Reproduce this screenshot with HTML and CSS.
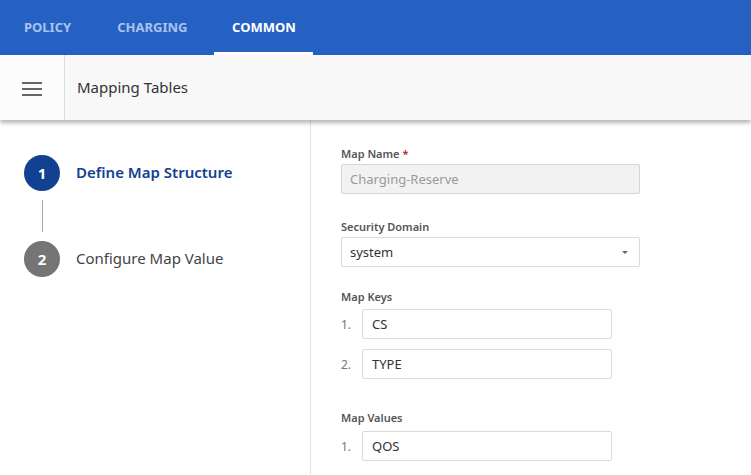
FILE: index.html
```html
<!DOCTYPE html>
<html>
<head>
<meta charset="utf-8">
<link rel="stylesheet" href="styles.css">
</head>
<body>
<nav class="tabs">
  <div class="tab">POLICY</div>
  <div class="tab">CHARGING</div>
  <div class="tab active">COMMON</div>
</nav>
<header class="header">
  <div class="menu">
    <svg width="20" height="14" viewBox="0 0 20 14"><rect x="0" y="0" width="20" height="2" fill="#666"/><rect x="0" y="6" width="20" height="2" fill="#666"/><rect x="0" y="12" width="20" height="2" fill="#666"/></svg>
  </div>
  <div class="title">Mapping Tables</div>
</header>
<main class="main">
  <aside class="steps">
    <div class="step current"><span class="num">1</span><span class="label">Define Map Structure</span></div>
    <div class="connector"></div>
    <div class="step"><span class="num">2</span><span class="label">Configure Map Value</span></div>
  </aside>
  <section class="form">
    <div class="field">
      <div class="flabel">Map Name <span class="req">*</span></div>
      <div class="input disabled">Charging-Reserve</div>
    </div>
    <div class="field">
      <div class="flabel">Security Domain</div>
      <div class="input select">system<span class="caret"></span></div>
    </div>
    <div class="field keys">
      <div class="flabel">Map Keys</div>
      <div class="row"><span class="idx">1.</span><div class="input short">CS</div></div>
      <div class="row"><span class="idx">2.</span><div class="input short">TYPE</div></div>
    </div>
    <div class="field values">
      <div class="flabel">Map Values</div>
      <div class="row"><span class="idx">1.</span><div class="input short">QOS</div></div>
    </div>
  </section>
</main>
</body>
</html>
```

FILE: styles.css
```css
* { box-sizing: border-box; }
html, body { margin: 0; padding: 0; }
body {
  width: 751px;
  height: 475px;
  overflow: hidden;
  background: #fff;
  font-family: "Noto Sans", "Open Sans", sans-serif;
  color: #333;
}
.tabs {
  height: 55px;
  background: #2561c3;
  display: flex;
  padding-left: 1px;
}
.tab {
  padding: 0 23px;
  height: 55px;
  line-height: 55px;
  font-size: 13px;
  font-weight: 700;
  color: #a9c3ee;
}
.tab.active {
  color: #fff;
  margin-left: 4px;
  padding: 0;
  width: 99px;
  text-align: center;
  box-shadow: inset 0 -3px 0 #fff;
}
.header {
  height: 65px;
  display: flex;
  background: #f8f8f8;
  box-shadow: 0 3px 4px rgba(0,0,0,0.28);
  position: relative;
  z-index: 1;
}
.menu {
  width: 65px;
  background: #fcfcfc;
  border-right: 1px solid #dcdcdc;
  display: flex;
  align-items: center;
  justify-content: center;
  padding-top: 3px;
}
.title {
  padding-left: 12px;
  display: flex;
  align-items: center;
  font-size: 15px;
  color: #333;
  padding-bottom: 1px;
}
.main {
  display: flex;
  height: 355px;
}
.steps {
  width: 311px;
  border-right: 1px solid #e2e2e2;
  padding: 35px 0 0 24px;
}
.step {
  display: flex;
  align-items: center;
  height: 36px;
}
.num {
  width: 36px;
  height: 36px;
  border-radius: 50%;
  background: #757575;
  color: #fff;
  font-size: 15px;
  font-weight: 700;
  display: flex;
  align-items: center;
  justify-content: center;
}
.step.current .num { background: #124191; }
.label {
  margin-left: 16px;
  font-size: 15px;
  color: #444;
  padding-bottom: 2px;
}
.step.current .label {
  color: #124191;
  font-weight: 600;
}
.connector {
  width: 1px;
  height: 32px;
  background: #a8a8a8;
  margin: 9px 0 9px 18px;
}
.form {
  padding: 26px 0 0 30px;
  flex: 1;
}
.field { margin-bottom: 25px; }
.field:nth-child(2) { margin-bottom: 22px; }
.field.keys { margin-bottom: 31px; }
.flabel {
  font-size: 11px;
  font-weight: 600;
  color: #555;
  margin-bottom: 3px;
  height: 15px;
}
.field.keys .flabel { margin-bottom: 5px; }
.field.values .flabel { margin-bottom: 6px; }
.req { color: #c4182f; }
.input {
  width: 299px;
  height: 30px;
  border: 1px solid #dadada;
  border-radius: 2px;
  padding: 0 8px;
  display: flex;
  align-items: center;
  font-size: 13px;
  color: #333;
  background: #fff;
}
.input.disabled {
  background: #f2f2f2;
  color: #9a9a9a;
  border-color: #d5d5d5;
}
.select { position: relative; }
.caret {
  position: absolute;
  right: 11px;
  top: 13px;
  border-left: 3px solid transparent;
  border-right: 3px solid transparent;
  border-top: 3px solid #666;
}
.row {
  display: flex;
  align-items: center;
  margin-bottom: 10px;
}
.idx {
  width: 21px;
  font-size: 12px;
  color: #777;
}
.input.short {
  width: 250px;
  padding-left: 9px;
}
```
